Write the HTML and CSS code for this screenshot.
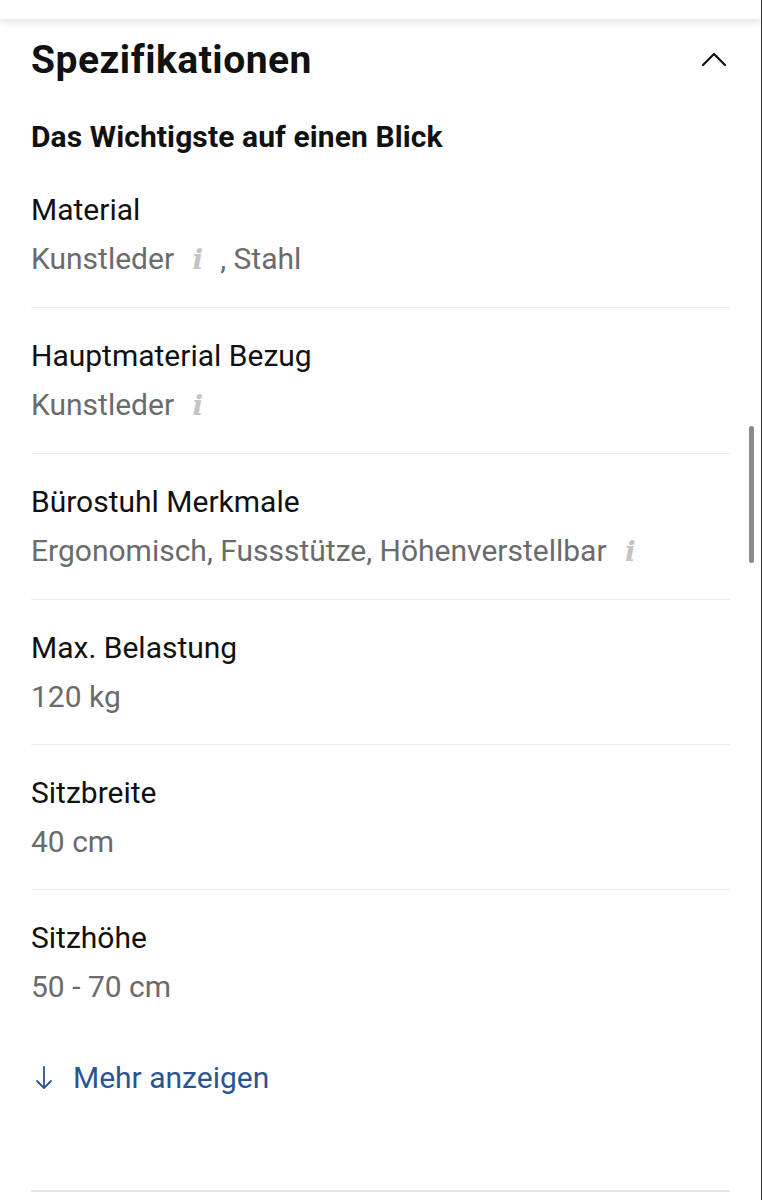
FILE: index.html
```html
<!DOCTYPE html>
<html lang="de">
<head>
  <meta charset="UTF-8" />
  <meta name="viewport" content="width=device-width, initial-scale=1.0" />
  <title>Spezifikationen</title>
  <link rel="stylesheet" href="styles.css">
</head>
<body>
  <div class="screen">
    <div class="top-bar"></div>

    <section class="specs">
      <div class="specs-header">
        <h2>Spezifikationen</h2>
        <svg class="chevron" width="26" height="16" viewBox="0 0 26 16" aria-hidden="true">
          <path d="M2 14 L13 3 L24 14" fill="none" stroke="#111" stroke-width="2.2" stroke-linecap="round" stroke-linejoin="round" />
        </svg>
      </div>

      <h3>Das Wichtigste auf einen Blick</h3>

      <ul class="spec-list">
        <li class="spec-row">
          <div class="spec-label">Material</div>
          <div class="spec-value">Kunstleder <span class="info">i</span>, Stahl</div>
        </li>
        <li class="spec-row">
          <div class="spec-label">Hauptmaterial Bezug</div>
          <div class="spec-value">Kunstleder <span class="info">i</span></div>
        </li>
        <li class="spec-row">
          <div class="spec-label">Bürostuhl Merkmale</div>
          <div class="spec-value">Ergonomisch, Fussstütze, Höhenverstellbar <span class="info">i</span></div>
        </li>
        <li class="spec-row">
          <div class="spec-label">Max. Belastung</div>
          <div class="spec-value">120 kg</div>
        </li>
        <li class="spec-row">
          <div class="spec-label">Sitzbreite</div>
          <div class="spec-value">40 cm</div>
        </li>
        <li class="spec-row">
          <div class="spec-label">Sitzhöhe</div>
          <div class="spec-value">50 - 70 cm</div>
        </li>
      </ul>

      <a class="more-link" href="#">
        <svg width="20" height="26" viewBox="0 0 20 26" aria-hidden="true">
          <path d="M10 2 V23 M3 16 L10 23 L17 16" fill="none" stroke="#2b5491" stroke-width="1.8" stroke-linecap="round" stroke-linejoin="round" />
        </svg>
        Mehr anzeigen
      </a>
    </section>

    <div class="bottom-rule"></div>

    <div class="scrollbar"></div>
  </div>
</body>
</html>
```

FILE: styles.css
```css
body { margin: 0; background: #fff; font-family: Roboto, "Noto Sans", sans-serif; color: #111; }
.screen { position: relative; width: 761px; height: 1200px; border-right: 1px solid #333; overflow: hidden; background: #fff; }
.top-bar { height: 19px; background: #fff; box-shadow: 0 3px 8px rgba(0,0,0,0.12); position: relative; z-index: 1; }

.specs { padding: 0 31px; }
.specs-header { display: flex; align-items: center; justify-content: space-between; height: 82px; }
.specs-header h2 { margin: 0; font-size: 39px; line-height: 46px; font-weight: 700; letter-spacing: 0.5px; }
.chevron { margin-right: 3px; margin-top: -2px; }

h3 { margin: 16px 0 0; font-size: 30px; line-height: 40px; font-weight: 700; letter-spacing: 0.1px; }

.spec-list { list-style: none; margin: 33px 0 0; padding: 0; }
.spec-row { padding: 0 0 27px; border-bottom: 1.5px solid #ececec; margin-bottom: 28px; }
.spec-row:last-child { border-bottom: none; margin-bottom: 0; padding-bottom: 0; }
.spec-label { font-size: 30px; line-height: 40px; color: #111; }
.spec-value { font-size: 30px; line-height: 40px; color: #6b6b6b; margin-top: 9px; }
.info { font-family: "DejaVu Serif", "Liberation Serif", serif; font-style: italic; font-weight: 700; color: #c4c4c4; font-size: 28px; margin: 0 17px 0 11px; }

.more-link { display: flex; align-items: center; gap: 19px; margin-top: 51px; padding-left: 3px; font-size: 30px; line-height: 40px; color: #2b5491; text-decoration: none; }

.bottom-rule { margin: 92px 31px 0; height: 2px; background: #dfe3ec; }

.scrollbar { position: absolute; left: 749px; top: 426px; width: 5px; height: 137px; border-radius: 3px; background: #8a8a8a; }
```
